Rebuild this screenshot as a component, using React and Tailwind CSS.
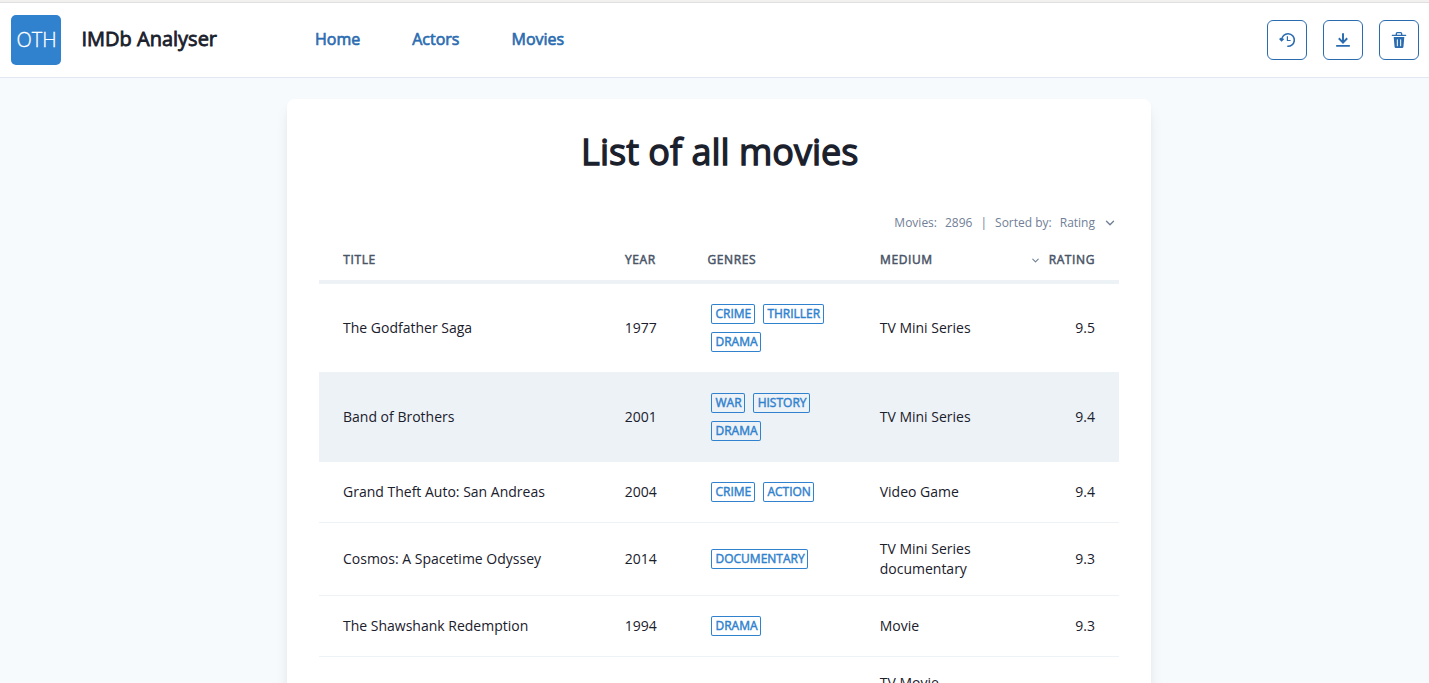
import React from "react";
import { ChevronDown } from "lucide-react";

const movies = [
  { title: "The Godfather Saga", year: 1977, genres: ["Crime", "Thriller", "Drama"], medium: "TV Mini Series", rating: "9.5" },
  { title: "Band of Brothers", year: 2001, genres: ["War", "History", "Drama"], medium: "TV Mini Series", rating: "9.4", active: true },
  { title: "Grand Theft Auto: San Andreas", year: 2004, genres: ["Crime", "Action"], medium: "Video Game", rating: "9.4" },
  { title: "Cosmos: A Spacetime Odyssey", year: 2014, genres: ["Documentary"], medium: "TV Mini Series documentary", rating: "9.3" },
  { title: "The Shawshank Redemption", year: 1994, genres: ["Drama"], medium: "Movie", rating: "9.3" },
  { title: "", year: "", genres: [], medium: ["TV Movie", <br key="br" />, "\u00a0"], rating: "" },
];

const columns = "grid grid-cols-[282px_82px_173px_137px_126px]";

function HistoryIcon() {
  return (
    <svg viewBox="0 0 16 16" className="size-4" fill="none" stroke="currentColor">
      <path d="M2.700 8A6.300 6.300 0 1 1 8.300 14.250" strokeWidth="1.600" />
      <path d="M0 6.900L1.700 5.700L5.400 7L2.500 9.800z" fill="currentColor" stroke="none" />
      <path d="M8.400 4.200V8.500H11.600" strokeWidth="1.200" />
    </svg>
  );
}

function DownloadIcon() {
  return (
    <svg viewBox="0 0 14 14" className="size-4" fill="currentColor">
      <path d="M11.2857,6.05714 L10.08571,4.85714 L7.85714,7.14786 L7.85714,1 L6.14286,1 L6.14286,7.14786 L3.91429,4.85714 L2.71429,6.05714 L7,10.42857 L11.2857,6.05714 Z M1,11.2857 L1,13 L13,13 L13,11.2857 L1,11.2857 Z" />
    </svg>
  );
}

function DeleteIcon() {
  return (
    <svg viewBox="0 0 24 24" className="size-4" fill="currentColor">
      <path d="M19.452 7.5H4.547a.5.5 0 00-.5.545l1.287 14.136A2 2 0 007.326 24h9.347a2 2 0 001.992-1.819L19.95 8.045a.5.5 0 00-.129-.382.5.5 0 00-.369-.163zm-9.2 13a.75.75 0 01-1.5 0v-9a.75.75 0 011.5 0zm5 0a.75.75 0 01-1.5 0v-9a.75.75 0 011.5 0zM22 4h-4.75a.25.25 0 01-.25-.25V2.5A2.5 2.5 0 0014.5 0h-5A2.5 2.5 0 007 2.5v1.25a.25.25 0 01-.25.25H2a1 1 0 000 2h20a1 1 0 000-2zM9 3.75V2.5a.5.5 0 01.5-.5h5a.5.5 0 01.5.5v1.25a.25.25 0 01-.25.25h-5.5A.25.25 0 019 3.75z" />
    </svg>
  );
}

function IconButton({ label, children }) {
  return (
    <button aria-label={label} className="flex size-10 items-center justify-center rounded-md border border-[#2b6cb0] text-[#2b6cb0]">
      {children}
    </button>
  );
}

function Tag({ children }) {
  return (
    <span className="mx-1 my-1 flex h-5 items-center rounded-[2px] pr-[3.6px] pb-px pl-[4.5px] text-xs leading-[18px] uppercase text-[#3182ce] [-webkit-text-stroke:0.45px] shadow-[inset_0_0_0_1px_#3182ce]">
      {children}
    </span>
  );
}

function Header() {
  return (
    <header className="flex h-[75px] items-center border-b border-[#e2e8f0] bg-white pr-2.5 pl-[11px]">
      <div className="flex size-[50px] items-center justify-center rounded-[5px] bg-[#3182ce] pl-px text-xl font-light text-white [-webkit-text-stroke:0.3px]">OTH</div>
      <div className="ml-[20.5px] w-[233.5px] pb-0.5 text-xl text-[#1a202c] [-webkit-text-stroke:0.8px]">IMDb Analyser</div>
      <nav className="flex gap-[52px] pb-0.5 text-base text-[#2b6cb0] [-webkit-text-stroke:0.65px]">
        <a>Home</a>
        <a>Actors</a>
        <a>Movies</a>
      </nav>
      <div className="ml-auto flex gap-4">
        <IconButton label="History"><HistoryIcon /></IconButton>
        <IconButton label="Download"><DownloadIcon /></IconButton>
        <IconButton label="Delete"><DeleteIcon /></IconButton>
      </div>
    </header>
  );
}

export default function App() {
  return (
    <div className="h-[683px] overflow-hidden bg-[#f7fafc] font-['Open_Sans',sans-serif] text-[#1a202c]">
      <div className="h-[3px] border-b border-[#dfdfdf] bg-[#f2f1f0]" />
      <Header />
      <main className="mt-[21px] ml-[287px] h-[700px] w-[864px] rounded-lg bg-white px-8 pt-[29px] shadow-[0_10px_15px_-3px_rgba(0,0,0,0.1),0_4px_6px_-2px_rgba(0,0,0,0.05)]">
        <h1 className="pl-[1.5px] text-center text-4xl leading-[48px] [-webkit-text-stroke:1.3px]">List of all movies</h1>
        <div className="mt-[38px] flex h-[18px] items-center justify-end gap-2 pr-[2px] text-xs text-[#718096]">
          <span>Movies:</span>
          <span>2896</span>
          <span>|</span>
          <span>Sorted by:</span>
          <span>Rating</span>
          <ChevronDown className="size-3.5" strokeWidth={2.4} />
        </div>
        <div className={`${columns} mt-2 h-[44px] items-center border-b-4 border-[#edf2f7] pb-px text-xs tracking-[0.6px] uppercase text-[#4a5568] [-webkit-text-stroke:0.5px]`}>
          <div className="pl-[24.3px]">Title</div>
          <div className="pl-6">Year</div>
          <div className="pl-[24.5px]">Genres</div>
          <div className="pl-6">Medium</div>
          <div className="flex items-center justify-end gap-2 pr-6">
            <ChevronDown className="mt-0.5 size-[11px] text-[#718096]" strokeWidth={2.4} />
            <span>Rating</span>
          </div>
        </div>
        {movies.map((m, i) => (
          <div key={i} className={`${columns} items-center border-b border-[#edf2f7] py-4 text-sm leading-5 ${m.active ? "bg-[#edf2f7]" : ""}`}>
            <div className="pl-6">{m.title}</div>
            <div className="pl-[23.7px]">{m.year}</div>
            <div className="flex flex-wrap pl-6">
              {m.genres.map((g) => <Tag key={g}>{g}</Tag>)}
            </div>
            <div className="pr-2 pl-[23.7px]">{m.medium}</div>
            <div className="pr-6 text-right">{m.rating}</div>
          </div>
        ))}
      </main>
    </div>
  );
}
